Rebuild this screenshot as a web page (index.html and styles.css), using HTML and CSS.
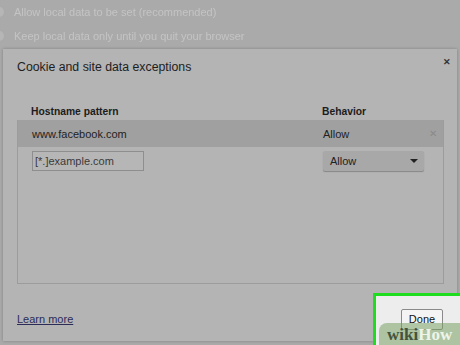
FILE: index.html
```html
<!DOCTYPE html>
<html lang="en">
<head>
    <meta charset="UTF-8">
    <meta name="viewport" content="width=device-width, initial-scale=1.0">
    <title>Cookie and site data exceptions</title>
    <link rel="stylesheet" href="styles.css">
</head>
<body>
    <div class="page">
        <!-- settings page behind the dialog -->
        <div class="behind">
            <div class="behind-row"><span class="radio"></span>Allow local data to be set (recommended)</div>
            <div class="behind-row"><span class="radio"></span>Keep local data only until you quit your browser</div>
        </div>

        <div class="dialog">
            <div class="dialog-header">
                <h1>Cookie and site data exceptions</h1>
                <span class="close">&#x2715;</span>
            </div>

            <div class="columns">
                <span class="col-host">Hostname pattern</span>
                <span class="col-behavior">Behavior</span>
            </div>

            <div class="exception-list">
                <div class="row selected">
                    <span class="col-host">www.facebook.com</span>
                    <span class="col-behavior">Allow</span>
                    <span class="row-remove">&#x2715;</span>
                </div>
                <div class="row new-row">
                    <span class="col-host"><span class="pattern-input">[*.]example.com</span></span>
                    <span class="col-behavior">
                        <span class="behavior-select">Allow<span class="caret"></span></span>
                    </span>
                </div>
            </div>

            <div class="dialog-footer">
                <a class="learn-more" href="#">Learn more</a>
            </div>
        </div>

        <!-- highlighted Done button -->
        <div class="highlight">
            <span class="done-btn">Done</span>
        </div>
        <div class="watermark"><span class="wiki">wiki</span><span class="how">How</span></div>
    </div>
</body>
</html>
```

FILE: styles.css
```css
body {
    margin: 0;
    font-family: "Liberation Sans", Arial, sans-serif;
    background-color: #aaaaaa;
}

.page {
    position: relative;
    width: 460px;
    height: 345px;
    overflow: hidden;
}

.behind {
    height: 49px;
    filter: blur(0.7px);
}

.behind-row {
    display: flex;
    align-items: center;
    height: 24px;
    font-size: 11px;
    color: #c4c4c4;
}

.radio {
    width: 10px;
    height: 10px;
    margin: 0 10px 0 -6px;
    border-radius: 50%;
    background-color: #b6b6b6;
}

.dialog {
    display: flex;
    flex-direction: column;
    margin: 0 3px;
    height: 292px;
    background-color: #b4b4b4;
    box-shadow: 0 0 3px rgba(0, 0, 0, 0.25);
}

.dialog-header {
    display: flex;
    justify-content: space-between;
    height: 36px;
    padding: 0 6px 0 14px;
}

.dialog-header h1 {
    margin: 11px 0 0;
    font-size: 12.3px;
    font-weight: normal;
    color: #1e1e1e;
}

.close {
    margin-top: 8px;
    font-size: 9px;
    font-weight: bold;
    color: #333;
}

.columns {
    display: flex;
    align-items: center;
    height: 35px;
    padding: 0 0 0 28px;
    font-size: 10.3px;
    font-weight: bold;
    color: #1c1c1c;
}

.columns .col-host {
    width: 291px;
    padding-top: 17px;
}

.columns .col-behavior {
    padding-top: 17px;
}

.exception-list {
    height: 163px;
    margin: 0 13px 0 14px;
    border: 1px solid #9c9c9c;
    border-top: none;
}

.row {
    display: flex;
    align-items: center;
    padding-left: 14px;
    font-size: 11px;
    color: #222;
}

.row .col-host {
    width: 291px;
}

.row.selected {
    height: 27px;
    background-color: #a0a0a0;
}

.row-remove {
    margin-left: auto;
    margin-right: 6px;
    font-size: 10px;
    color: #8a8a8a;
}

.new-row {
    height: 20px;
    padding-top: 4px;
}

.pattern-input {
    display: flex;
    align-items: center;
    width: 108px;
    height: 18px;
    padding-left: 2px;
    border: 1px solid #8e8e8e;
    background-color: #b6b6b6;
    color: #3a3a3a;
}

.behavior-select {
    display: flex;
    align-items: center;
    justify-content: space-between;
    width: 88px;
    height: 20px;
    padding: 0 6px 0 7px;
    border-radius: 2px;
    background-color: #a8a8a8;
    box-shadow: 0 1px 1px rgba(0, 0, 0, 0.25);
    color: #222;
}

.caret {
    width: 0;
    height: 0;
    border-left: 4px solid transparent;
    border-right: 4px solid transparent;
    border-top: 4px solid #222;
}

.dialog-footer {
    display: flex;
    align-items: flex-start;
    padding: 29px 0 0 14px;
    flex: 1;
}

.learn-more {
    font-size: 11px;
    color: #2c2c58;
}

.highlight {
    position: absolute;
    left: 373px;
    top: 293px;
    width: 90px;
    height: 56px;
    box-sizing: border-box;
    border: 3px solid #1edc1e;
    background-color: #ededed;
}

.done-btn {
    position: absolute;
    left: 25px;
    top: 13px;
    width: 42px;
    height: 21px;
    box-sizing: border-box;
    border: 1px solid #8a8a8a;
    border-radius: 2px;
    background-color: #f4f4f4;
    font-size: 11px;
    line-height: 19px;
    text-align: center;
    color: #111;
}

.watermark {
    position: absolute;
    left: 379px;
    top: 323px;
    width: 84px;
    height: 24px;
    padding-left: 8px;
    box-sizing: border-box;
    border-radius: 8px 0 0 0;
    background-color: rgba(120, 160, 100, 0.55);
    font-family: "Liberation Serif", "DejaVu Serif", serif;
    font-size: 17px;
    font-weight: bold;
    line-height: 24px;
}

.wiki {
    color: #45533c;
}

.how {
    color: #eef4e8;
}
```
